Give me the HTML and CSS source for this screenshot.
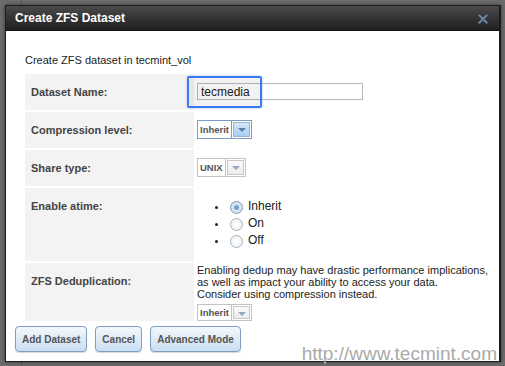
FILE: index.html
```html
<!DOCTYPE html>
<html lang="en">
<head>
  <meta charset="UTF-8">
  <title>Create ZFS Dataset</title>
  <link rel="stylesheet" href="styles.css">
</head>
<body>
  <div class="dialog">
    <div class="titlebar">
      <span class="title">Create ZFS Dataset</span>
      <svg class="close" width="12" height="12" viewBox="0 0 12 12">
        <path d="M2.5 2.5 L9.5 9.5 M9.5 2.5 L2.5 9.5" stroke="#2c3642" stroke-width="4" stroke-linecap="square"/>
        <path d="M2.5 2.5 L9.5 9.5 M9.5 2.5 L2.5 9.5" stroke="#71849b" stroke-width="2" stroke-linecap="square"/>
      </svg>
    </div>
    <div class="content">
      <p class="intro">Create ZFS dataset in tecmint_vol</p>
      <table class="form-table">
        <tr>
          <td class="label">Dataset Name:</td>
          <td class="value pad-name">
            <input type="text" class="text-input" value="tecmedia">
            <span class="focus-ring"></span>
          </td>
        </tr>
        <tr>
          <td class="label">Compression level:</td>
          <td class="value pad-select">
            <div class="combo active"><span class="combo-text">Inherit</span><span class="combo-btn"></span></div>
          </td>
        </tr>
        <tr>
          <td class="label">Share type:</td>
          <td class="value pad-select">
            <div class="combo"><span class="combo-text">UNIX</span><span class="combo-btn"></span></div>
          </td>
        </tr>
        <tr>
          <td class="label atime">Enable atime:</td>
          <td class="value">
            <ul class="radios">
              <li><span class="radio checked"></span>Inherit</li>
              <li><span class="radio"></span>On</li>
              <li><span class="radio"></span>Off</li>
            </ul>
          </td>
        </tr>
        <tr>
          <td class="label dedup">ZFS Deduplication:</td>
          <td class="value pad-dedup">
            <div class="note">Enabling dedup may have drastic performance implications,<br>as well as impact your ability to access your data.<br>Consider using compression instead.</div>
            <div class="combo"><span class="combo-text">Inherit</span><span class="combo-btn"></span></div>
          </td>
        </tr>
      </table>
      <div class="buttons">
        <button type="button">Add Dataset</button>
        <button type="button">Cancel</button>
        <button type="button">Advanced Mode</button>
      </div>
      <div class="watermark">http://www.tecmint.com</div>
    </div>
  </div>
</body>
</html>
```

FILE: styles.css
```css
body {
  margin: 0;
  height: 366px;
  overflow: hidden;
  font-family: "Liberation Sans", Arial, sans-serif;
  background-color: #6c6c6c;
  background-image: linear-gradient(to right, transparent 21px, #5a5a5a 21px, #5a5a5a 22px, transparent 22px);
}

.dialog {
  margin: 5px 0 0 5px;
  width: 493px;
  height: 355px;
  border: 1px solid #1c1c1c;
  border-right-width: 2px;
  background-color: #fff;
  box-shadow: 0 0 4px rgba(0, 0, 0, 0.5);
  position: relative;
}

.titlebar {
  height: 24px;
  display: flex;
  align-items: center;
  justify-content: space-between;
  padding: 0 10px 0 9px;
  background: linear-gradient(#4a4a4a, #1f1f1f);
  border-bottom: 1px solid #111;
}

.title {
  color: #fff;
  font-size: 12px;
  font-weight: bold;
}

.close {
  margin-top: 1px;
}

.content {
  padding: 0 0 0 9px;
}

.intro {
  margin: 0;
  padding: 23px 0 0 10px;
  height: 18px;
  font-size: 11px;
  color: #222;
}

.form-table {
  margin-left: 10px;
  border-collapse: separate;
  border-spacing: 0 2px;
}

.form-table td {
  padding: 0;
  vertical-align: top;
}

.label {
  width: 169px;
  height: 36px;
  padding: 12px 0 0 6px !important;
  box-sizing: border-box;
  background-color: #f3f3f3;
  font-size: 11px;
  font-weight: bold;
  color: #444;
}

.value {
  padding-left: 3px !important;
  width: 300px;
  position: relative;
}

.pad-name {
  padding-top: 9px !important;
}

.pad-select {
  padding-top: 8px !important;
}

.text-input {
  display: block;
  width: 166px;
  height: 17px;
  box-sizing: border-box;
  border: 1px solid #b6b9c2;
  padding: 0 3px;
  font-family: "Liberation Sans", Arial, sans-serif;
  font-size: 12px;
  color: #222;
  background: #fff;
  margin: 0;
}

.focus-ring {
  position: absolute;
  left: -7px;
  top: 2px;
  width: 71px;
  height: 28px;
  border: 2px solid #3a7cf0;
  border-radius: 2px;
  background-color: rgba(0, 0, 0, 0.05);
  box-shadow: 0 0 2px #8fb4f5;
}

.combo {
  display: flex;
  width: fit-content;
  height: 19px;
  box-sizing: border-box;
  border: 1px solid #c3c3c3;
  background: #fff;
}

.combo-text {
  font-size: 9.5px;
  font-weight: bold;
  color: #555;
  padding: 0 2px;
  line-height: 17px;
  border-right: 1px solid #c3c3c3;
}

.combo-btn {
  width: 17px;
  margin: 1px;
  border: 1px solid #c8c8c8;
  box-sizing: border-box;
  background: linear-gradient(#fafafa, #ececec);
  position: relative;
}

.combo-btn::after {
  content: '';
  position: absolute;
  left: 4px;
  top: 5px;
  border-left: 4px solid transparent;
  border-right: 4px solid transparent;
  border-top: 4px solid #98a8bb;
}

.combo.active {
  border-color: #7a9ec4;
}

.combo.active .combo-text {
  border-right-color: #7a9ec4;
}

.combo.active .combo-btn {
  border-color: #9bb5d2;
  background: linear-gradient(#d6e7f9, #a9cdf3);
}

.combo.active .combo-btn::after {
  border-top-color: #5b7fa8;
}

.radios {
  margin: 0;
  padding: 10px 0 12px 33px;
  font-size: 12px;
  color: #222;
}

.radios li {
  height: 17px;
  line-height: 17px;
  display: flex;
  align-items: center;
  position: relative;
}

.radios li::before {
  content: '';
  position: absolute;
  left: -15px;
  top: 8px;
  width: 3px;
  height: 3px;
  border-radius: 50%;
  background: #222;
}

.radio {
  width: 11px;
  height: 11px;
  border-radius: 50%;
  border: 1px solid #a9b3bd;
  background: radial-gradient(#fff, #e7ebef);
  margin: 1px 5px 0 0;
  position: relative;
}

.radio.checked {
  border-color: #7f9ab6;
  background: radial-gradient(#e9f1f9, #cbd9e7);
}

.radio.checked::after {
  content: '';
  position: absolute;
  left: 3px;
  top: 3px;
  width: 5px;
  height: 5px;
  border-radius: 50%;
  background: #6f9fcf;
}

.pad-dedup {
  padding-top: 1px !important;
}

.note {
  font-size: 11px;
  line-height: 12px;
  color: #222;
  white-space: nowrap;
  margin-bottom: 4px;
}

.pad-dedup .combo {
  height: 17px;
}

.pad-dedup .combo-text {
  line-height: 15px;
}

.buttons {
  display: flex;
  gap: 8px;
  margin-top: 3px;
}

button {
  height: 26px;
  padding: 0 6px;
  border: 1px solid #7f9ec2;
  border-radius: 4px;
  background: linear-gradient(#f4f8fc, #c9def3);
  font-family: "Liberation Sans", Arial, sans-serif;
  font-size: 10px;
  font-weight: bold;
  color: #555;
  box-shadow: 0 1px 1px rgba(0, 0, 0, 0.15);
}

.watermark {
  position: absolute;
  right: 2px;
  bottom: -4px;
  font-size: 19px;
  color: #aaa;
}
```
